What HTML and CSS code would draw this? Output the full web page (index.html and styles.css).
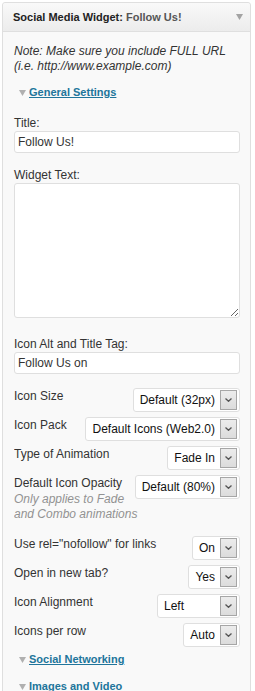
FILE: index.html
```html
<!DOCTYPE html>
<html lang="en">
<head>
    <meta charset="UTF-8">
    <meta name="viewport" content="width=device-width, initial-scale=1.0">
    <title>Social Media Widget</title>
    <link rel="stylesheet" href="styles.css">
</head>
<body>
    <div class="widget">
        <div class="widget-top">
            <h4>Social Media Widget: <span class="in-title">Follow Us!</span></h4>
            <svg class="toggle" width="7" height="6" viewBox="0 0 7 6"><path d="M0 0H7L3.5 6Z" fill="#a3a3a3"/></svg>
        </div>

        <div class="widget-inside">
            <p class="note">Note: Make sure you include FULL URL (i.e. http://www.example.com)</p>

            <h3 class="section">
                <svg class="arrow" width="7" height="6" viewBox="0 0 7 6"><path d="M0 0H7L3.5 6Z" fill="#b0b0b0"/></svg>
                <a href="#">General Settings</a>
            </h3>

            <div class="settings">
                <label class="field-label">Title:</label>
                <input class="text" type="text" value="Follow Us!">

                <label class="field-label">Widget Text:</label>
                <textarea class="text area"></textarea>

                <label class="field-label">Icon Alt and Title Tag:</label>
                <input class="text last" type="text" value="Follow Us on">

                <div class="option">
                    <div class="select"><span>Default (32px)</span><span class="drop"><svg width="7" height="4" viewBox="0 0 7 4"><path d="M0.5 0.5L3.5 3.3L6.5 0.5" fill="none" stroke="#555" stroke-width="1.3"/></svg></span></div>
                    <span class="option-label">Icon Size</span>
                </div>

                <div class="option">
                    <div class="select"><span>Default Icons (Web2.0)</span><span class="drop"><svg width="7" height="4" viewBox="0 0 7 4"><path d="M0.5 0.5L3.5 3.3L6.5 0.5" fill="none" stroke="#555" stroke-width="1.3"/></svg></span></div>
                    <span class="option-label">Icon Pack</span>
                </div>

                <div class="option">
                    <div class="select"><span>Fade In</span><span class="drop"><svg width="7" height="4" viewBox="0 0 7 4"><path d="M0.5 0.5L3.5 3.3L6.5 0.5" fill="none" stroke="#555" stroke-width="1.3"/></svg></span></div>
                    <span class="option-label">Type of Animation</span>
                </div>

                <div class="option">
                    <div class="select"><span>Default (80%)</span><span class="drop"><svg width="7" height="4" viewBox="0 0 7 4"><path d="M0.5 0.5L3.5 3.3L6.5 0.5" fill="none" stroke="#555" stroke-width="1.3"/></svg></span></div>
                    <span class="option-label">Default Icon Opacity</span>
                    <span class="option-desc">Only applies to Fade and Combo animations</span>
                </div>

                <div class="option">
                    <div class="select"><span>On</span><span class="drop"><svg width="7" height="4" viewBox="0 0 7 4"><path d="M0.5 0.5L3.5 3.3L6.5 0.5" fill="none" stroke="#555" stroke-width="1.3"/></svg></span></div>
                    <span class="option-label">Use rel="nofollow" for links</span>
                </div>

                <div class="option">
                    <div class="select"><span>Yes</span><span class="drop"><svg width="7" height="4" viewBox="0 0 7 4"><path d="M0.5 0.5L3.5 3.3L6.5 0.5" fill="none" stroke="#555" stroke-width="1.3"/></svg></span></div>
                    <span class="option-label">Open in new tab?</span>
                </div>

                <div class="option">
                    <div class="select wide"><span>Left</span><span class="drop"><svg width="7" height="4" viewBox="0 0 7 4"><path d="M0.5 0.5L3.5 3.3L6.5 0.5" fill="none" stroke="#555" stroke-width="1.3"/></svg></span></div>
                    <span class="option-label">Icon Alignment</span>
                </div>

                <div class="option">
                    <div class="select"><span>Auto</span><span class="drop"><svg width="7" height="4" viewBox="0 0 7 4"><path d="M0.5 0.5L3.5 3.3L6.5 0.5" fill="none" stroke="#555" stroke-width="1.3"/></svg></span></div>
                    <span class="option-label">Icons per row</span>
                </div>
            </div>

            <h3 class="section">
                <svg class="arrow" width="7" height="6" viewBox="0 0 7 6"><path d="M0 0H7L3.5 6Z" fill="#b0b0b0"/></svg>
                <a href="#">Social Networking</a>
            </h3>

            <h3 class="section">
                <svg class="arrow" width="7" height="6" viewBox="0 0 7 6"><path d="M0 0H7L3.5 6Z" fill="#b0b0b0"/></svg>
                <a href="#">Images and Video</a>
            </h3>
        </div>
    </div>
</body>
</html>
```

FILE: styles.css
```css
* {
    margin: 0;
    padding: 0;
    box-sizing: border-box;
    font-family: 'Liberation Sans', Arial, sans-serif;
}

body {
    background: #fff;
    color: #333;
    font-size: 12px;
    line-height: 15px;
}

.widget {
    margin: 2px 4px 0 2px;
    border: 1px solid #dfdfdf;
    border-radius: 3px 3px 0 0;
    background: #f9f9f9;
}

.widget-top {
    display: flex;
    justify-content: space-between;
    align-items: center;
    height: 29px;
    padding: 0 7px 0 10px;
    border-bottom: 1px solid #dfdfdf;
    border-radius: 3px 3px 0 0;
    background: linear-gradient(#f9f9f9, #ececec);
}

.widget-top h4 {
    font-size: 11px;
    font-weight: bold;
    color: #222;
    line-height: 28px;
}

.in-title {
    color: #555;
}

.toggle {
    display: block;
}

.widget-inside {
    padding: 12px 10px 12px 11px;
}

.note {
    font-style: italic;
    margin-bottom: 11px;
}

.section {
    display: flex;
    align-items: center;
    gap: 3px;
    padding-left: 5px;
    font-size: 11px;
    font-weight: bold;
    line-height: 15px;
    margin-bottom: 12px;
}

.section a {
    color: #21759b;
    text-decoration: underline;
}

.arrow {
    display: block;
}

.settings {
    padding-top: 4px;
}

.field-label {
    display: block;
}

.text {
    display: block;
    width: 100%;
    height: 22px;
    margin-bottom: 15px;
    padding: 0 3px;
    border: 1px solid #dfdfdf;
    border-radius: 3px;
    background: #fff;
    color: #333;
    font-size: 12px;
    outline: none;
}

.text.area {
    height: 135px;
    margin-bottom: 19px;
    resize: both;
}

.text.last {
    margin-bottom: 14px;
}

.option {
    overflow: hidden;
    margin-bottom: 5px;
}

.option-label {
    display: block;
    padding-top: 1px;
}

.option-desc {
    display: block;
    margin: 1px 0 9px;
    font-style: italic;
    color: #929292;
}

.select {
    float: right;
    display: flex;
    align-items: center;
    gap: 5px;
    height: 24px;
    padding: 0 2px 0 6px;
    border: 1px solid #dfdfdf;
    border-radius: 3px;
    background: #fff;
    color: #111;
}

.select.wide {
    width: 83px;
    justify-content: space-between;
}

.drop {
    display: flex;
    align-items: center;
    justify-content: center;
    width: 17px;
    height: 20px;
    border: 1px solid #a6a6a6;
    background: linear-gradient(#ececec, #dcdcdc);
}

.drop svg {
    display: block;
}
```
